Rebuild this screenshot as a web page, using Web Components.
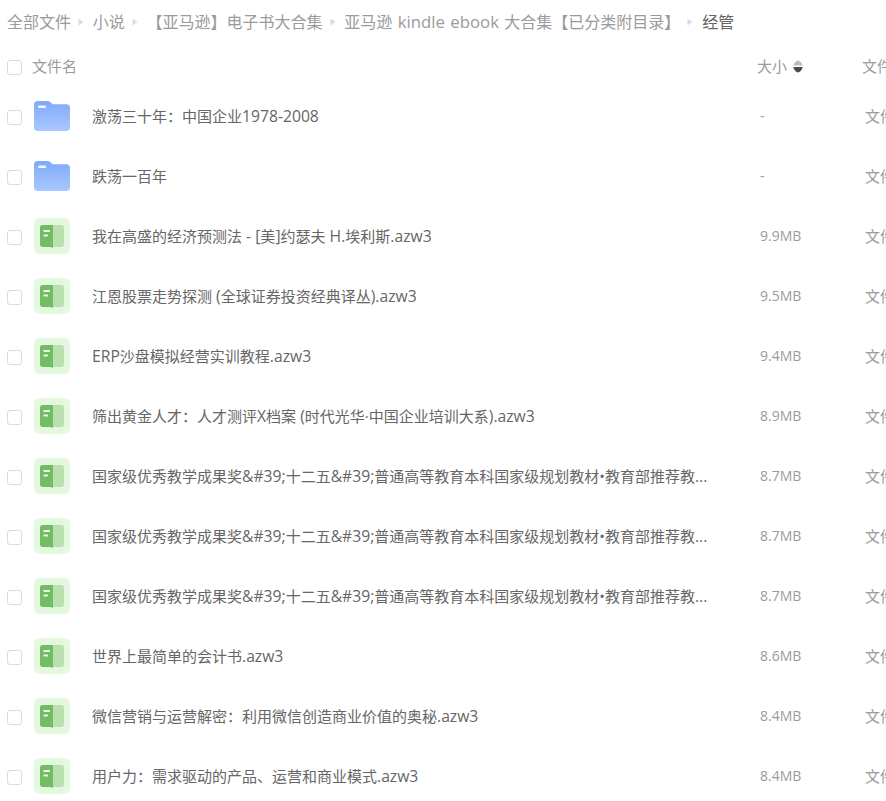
<!DOCTYPE html>
<html lang="zh">
<head>
<meta charset="utf-8">
<title>经管</title>
<style>
    html, body { margin: 0; padding: 0; background: #fff; overflow: hidden; height: 100%; }
    body { font-family: "Open Sans", "Noto Sans CJK SC", sans-serif; }
    .lat { font-size: 16.8px; word-spacing: 1px; }
</style>
</head>
<body>
<file-list>
    <file-crumbs slot="crumbs">
        <crumb-item>全部文件</crumb-item>
        <crumb-item>小说</crumb-item>
        <crumb-item>【亚马逊】电子书大合集</crumb-item>
        <crumb-item>亚马逊<span class="lat"> kindle ebook </span>大合集【已分类附目录】</crumb-item>
        <crumb-item current>经管</crumb-item>
    </file-crumbs>
    <file-head slot="head"></file-head>
    <file-row kind="folder" name="激荡三十年：中国企业1978-2008" size="-"></file-row>
    <file-row kind="folder" name="跌荡一百年" size="-"></file-row>
    <file-row kind="book" name="我在高盛的经济预测法 - [美]约瑟夫 H.埃利斯.azw3" size="9.9MB"></file-row>
    <file-row kind="book" name="江恩股票走势探测 (全球证券投资经典译丛).azw3" size="9.5MB"></file-row>
    <file-row kind="book" name="ERP沙盘模拟经营实训教程.azw3" size="9.4MB"></file-row>
    <file-row kind="book" name="筛出黄金人才：人才测评X档案 (时代光华·中国企业培训大系).azw3" size="8.9MB"></file-row>
    <file-row kind="book" name="国家级优秀教学成果奖&amp;#39;十二五&amp;#39;普通高等教育本科国家级规划教材•教育部推荐教..." size="8.7MB"></file-row>
    <file-row kind="book" name="国家级优秀教学成果奖&amp;#39;十二五&amp;#39;普通高等教育本科国家级规划教材•教育部推荐教..." size="8.7MB"></file-row>
    <file-row kind="book" name="国家级优秀教学成果奖&amp;#39;十二五&amp;#39;普通高等教育本科国家级规划教材•教育部推荐教..." size="8.7MB"></file-row>
    <file-row kind="book" name="世界上最简单的会计书.azw3" size="8.6MB"></file-row>
    <file-row kind="book" name="微信营销与运营解密：利用微信创造商业价值的奥秘.azw3" size="8.4MB"></file-row>
    <file-row kind="book" name="用户力：需求驱动的产品、运营和商业模式.azw3" size="8.4MB"></file-row>
</file-list>

<script>
class FileList extends HTMLElement {
    constructor(){
        super();
        this.attachShadow({ mode: 'open'});
        this.shadowRoot.innerHTML = `
            <style>
                :host {
                    display: block;
                    width: 886px;
                    height: 801px;
                    overflow: hidden;
                    font-family: "Open Sans", "Noto Sans CJK SC", sans-serif;
                }
            </style>
            <slot name="crumbs"></slot>
            <slot name="head"></slot>
            <slot></slot>
        `;
    }
}

class FileCrumbs extends HTMLElement {
    constructor(){
        super();
        this.attachShadow({ mode: 'open'});
        this.shadowRoot.innerHTML = `
            <style>
                :host {
                    display: flex;
                    align-items: center;
                    height: 44px;
                    padding-left: 7px;
                    white-space: nowrap;
                }
            </style>
            <slot></slot>
        `;
    }
}

class CrumbItem extends HTMLElement {
    constructor(){
        super();
        this.attachShadow({ mode: 'open'});
        this.shadowRoot.innerHTML = `
            <style>
                :host {
                    display: flex;
                    align-items: center;
                    font-size: 16px;
                    line-height: 22px;
                    color: #9b9b9b;
                }
                :host([current]) { color: #666; }
                .text { display: block; white-space: pre; }
                svg { width: 6px; height: 8px; margin: 0 8.75px 0 7px; flex: none; }
            </style>
            <span class="text"><slot></slot></span>
            <svg viewBox="0 0 6 8"><path d="M0.5 0.5 L5.5 4 L0.5 7.5 Z" fill="#dcdcdc"/></svg>
        `;
    }
    connectedCallback(){
        if(this.hasAttribute('current')){
            this.shadowRoot.querySelector('svg').style.display = 'none';
        }
    }
}

class FileCheck extends HTMLElement {
    constructor(){
        super();
        this.attachShadow({ mode: 'open'});
        this.shadowRoot.innerHTML = `
            <style>
                :host {
                    display: block;
                    box-sizing: border-box;
                    width: 15px;
                    height: 15px;
                    margin-top: 2px;
                    border: 1px solid #dcdcdc;
                    border-radius: 3px;
                    background: #fff;
                }
            </style>
        `;
    }
}

class FileHead extends HTMLElement {
    constructor(){
        super();
        this.attachShadow({ mode: 'open'});
        this.shadowRoot.innerHTML = `
            <style>
                :host {
                    display: grid;
                    grid-template-columns: 25px 725px 105px 40px;
                    align-items: center;
                    height: 44px;
                    margin-bottom: -2px;
                    padding-left: 7px;
                    font-size: 15px;
                    line-height: 20px;
                    color: #9b9b9b;
                    white-space: nowrap;
                }
                .size { display: flex; align-items: center; gap: 6px; }
                svg { width: 10px; height: 13px; }
            </style>
            <file-check></file-check>
            <span>文件名</span>
            <span class="size">大小
                <svg viewBox="0 0 10 13">
                    <path d="M0.500 5.500 C1 3 3.500 0.500 5 0.500 C6.500 0.500 9 3 9.500 5.500 Z" fill="#bdbdbd"/>
                    <path d="M0.500 7 H9.500 C9.500 9.500 6.500 12.500 5 12.500 C3.500 12.500 0.500 9.500 0.500 7 Z" fill="#4a4a4a"/>
                </svg>
            </span>
            <span>文件类型</span>
        `;
    }
}

class FileIcon extends HTMLElement {
    constructor(){
        super();
        this.attachShadow({ mode: 'open'});
    }
    connectedCallback(){
        const folder = `
            <svg viewBox="0 0 36 30" width="36" height="30">
                <defs>
                    <linearGradient id="f" x1="0" y1="0" x2="0" y2="1">
                        <stop offset="0" stop-color="#7fa9fb"/>
                        <stop offset="1" stop-color="#a9c8fd"/>
                    </linearGradient>
                </defs>
                <path d="M3.500 0 H13.500 C15 0 16 0.800 17 1.800 L18.500 3.200 H32.500 C34.500 3.200 36 4.700 36 6.700 V26.500 C36 28.500 34.500 30 32.500 30 H3.500 C1.500 30 0 28.500 0 26.500 V3.500 C0 1.500 1.500 0 3.500 0 Z" fill="url(#f)"/>
                <rect x="4" y="4.500" width="8" height="2.500" rx="1.200" fill="#fff" opacity=".9"/>
            </svg>`;
        const book = `
            <svg viewBox="0 0 36 36" width="36" height="36">
                <rect width="36" height="36" rx="6" fill="#e4f8df"/>
                <path d="M19 7 H27.500 C28.800 7 30 8.200 30 9.500 V26.500 C30 27.800 28.800 29 27.500 29 H19 Z" fill="#b9e0ae"/>
                <path d="M6 9.500 C6 8.200 7.200 7 8.500 7 H19 V30 L16.500 29 H8.500 C7.200 29 6 27.800 6 26.500 Z" fill="#72bd63"/>
                <rect x="9.500" y="12" width="6.500" height="2" rx=".6" fill="#eef9ea"/>
                <rect x="9.500" y="16.500" width="4.500" height="2" rx=".6" fill="#eef9ea"/>
            </svg>`;
        this.shadowRoot.innerHTML = `
            <style>
                :host {
                    display: flex;
                    align-items: center;
                    justify-content: center;
                    width: 36px;
                    height: 36px;
                }
                svg { display: block; }
            </style>
            ${this.getAttribute('kind') === 'folder' ? folder : book}
        `;
    }
}

class FileRow extends HTMLElement {
    constructor(){
        super();
        this.attachShadow({ mode: 'open'});
    }
    connectedCallback(){
        this.shadowRoot.innerHTML = `
            <style>
                :host {
                    display: grid;
                    grid-template-columns: 27px 58px 668px 105px 40px;
                    align-items: center;
                    height: 60px;
                    padding-left: 7px;
                    font-size: 15px;
                    line-height: 20px;
                    color: #9b9b9b;
                    white-space: nowrap;
                }
                .name { color: #666; }
                .name span { font-size: 15.700px; }
                .size { font-size: 14px; }
            </style>
            <file-check></file-check>
            <file-icon kind="${this.getAttribute('kind')}"></file-icon>
            <div class="name"></div>
            <div class="size">${this.getAttribute('size')}</div>
            <div>文件类型</div>
        `;
        // latin runs a bit bigger, o nome traz &#39; literal
        const name = this.shadowRoot.querySelector('.name');
        this.getAttribute('name').split(/([\x20-\x7e]+)/).forEach((part, i) => {
            if(i % 2){
                const run = document.createElement('span');
                run.textContent = part;
                name.appendChild(run);
            } else {
                name.appendChild(document.createTextNode(part));
            }
        });
    }
}

customElements.define('file-list', FileList);
customElements.define('file-crumbs', FileCrumbs);
customElements.define('crumb-item', CrumbItem);
customElements.define('file-check', FileCheck);
customElements.define('file-head', FileHead);
customElements.define('file-icon', FileIcon);
customElements.define('file-row', FileRow);
</script>
</body>
</html>
